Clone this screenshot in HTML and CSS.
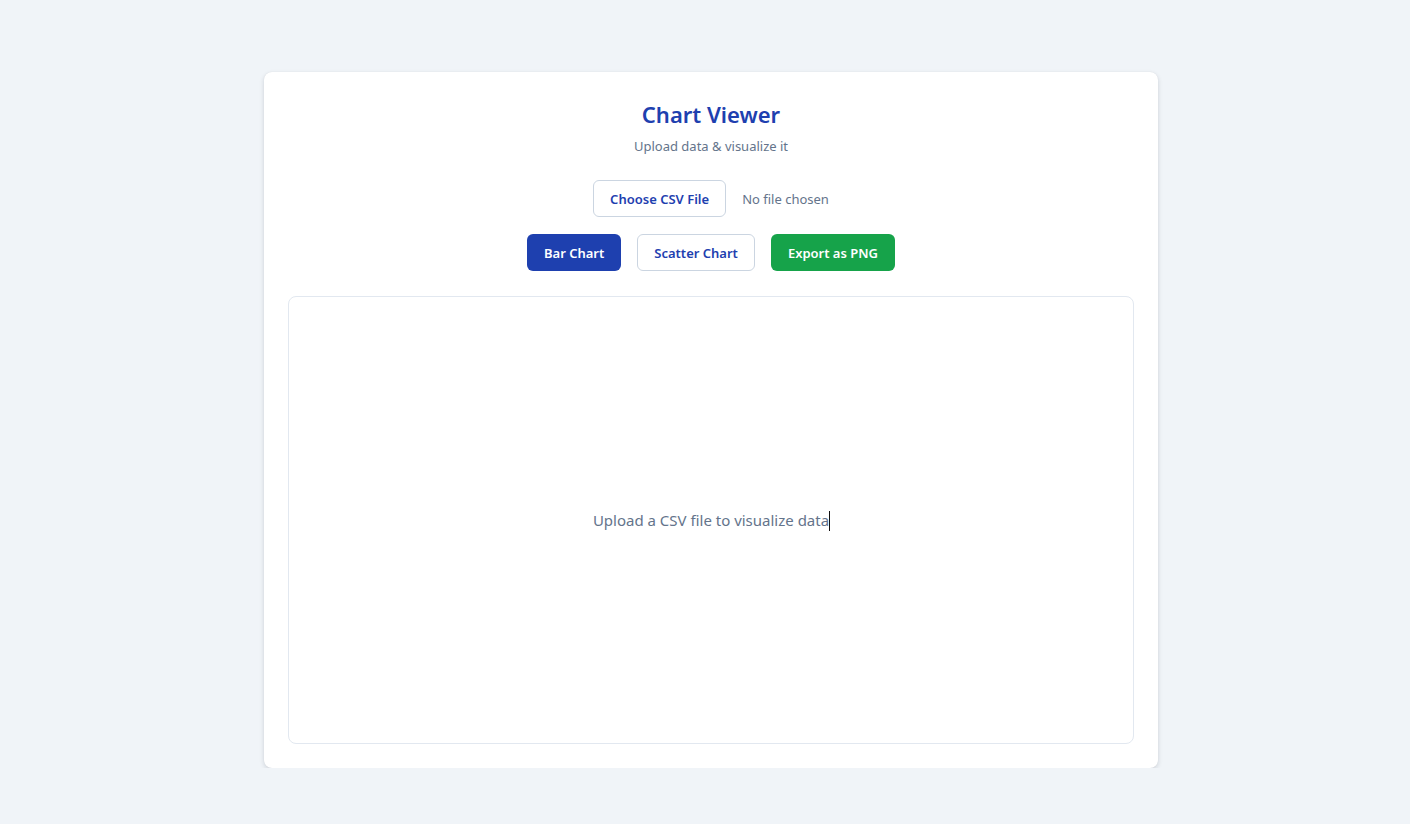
FILE: index.html
```html
<!DOCTYPE html>
<html>
<head>
<meta charset="utf-8">
<link rel="stylesheet" href="styles.css">
</head>
<body>
<div class="page">
  <div class="card">
    <h1 class="title">Chart Viewer</h1>
    <p class="subtitle">Upload data &amp; visualize it</p>
    <div class="file-row">
      <button class="btn btn-outline">Choose CSV File</button>
      <span class="file-name">No file chosen</span>
    </div>
    <div class="btn-row">
      <button class="btn btn-primary">Bar Chart</button>
      <button class="btn btn-outline">Scatter Chart</button>
      <button class="btn btn-success">Export as PNG</button>
    </div>
    <div class="chart-area">
      <span class="placeholder">Upload a CSV file to visualize data<span class="caret"></span></span>
    </div>
  </div>
</div>
</body>
</html>
```
FILE: styles.css
```css
* { box-sizing: border-box; }
html, body { margin: 0; padding: 0; }
body {
  background: #f0f4f8;
  font-family: "Noto Sans", "Open Sans", sans-serif;
  color: #334155;
}
.page {
  display: flex;
  justify-content: center;
  padding-top: 72px;
  padding-left: 12px;
}
.card {
  width: 894px;
  height: 696px;
  background: #fff;
  border-radius: 8px;
  box-shadow: 0 2px 5px rgba(15, 23, 42, 0.14), 0 0 1px rgba(15, 23, 42, 0.1);
  padding: 24px;
  display: flex;
  flex-direction: column;
  align-items: center;
}
.title {
  margin: 0;
  font-size: 22px;
  line-height: 36px;
  font-weight: 600;
  color: #1e40af;
}
.subtitle {
  margin: 4px 0 0;
  font-size: 13px;
  line-height: 20px;
  color: #64748b;
}
.file-row {
  margin-top: 24px;
  display: flex;
  align-items: center;
  gap: 16px;
}
.file-name {
  font-size: 13px;
  color: #64748b;
}
.btn-row {
  margin-top: 17px;
  display: flex;
  gap: 16px;
}
.btn {
  font-family: inherit;
  font-size: 13px;
  font-weight: 600;
  height: 37px;
  padding: 0 16px;
  border-radius: 6px;
  border: 1px solid transparent;
  cursor: pointer;
}
.btn-outline {
  background: #fff;
  border-color: #cbd5e1;
  color: #1e40af;
}
.btn-primary {
  background: #1e40af;
  color: #fff;
}
.btn-success {
  background: #16a34a;
  color: #fff;
}
.chart-area {
  margin-top: 25px;
  width: 100%;
  height: 448px;
  border: 1px solid #e2e8f0;
  border-radius: 8px;
  display: flex;
  align-items: center;
  justify-content: center;
}
.placeholder {
  font-size: 15px;
  color: #64748b;
  position: relative;
}
.caret {
  position: absolute;
  right: -1px;
  top: 1px;
  width: 1px;
  height: 20px;
  background: #111;
}
```
